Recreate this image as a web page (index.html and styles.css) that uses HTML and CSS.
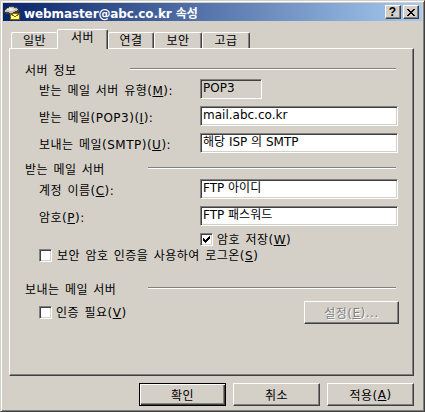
FILE: index.html
```html
<!DOCTYPE html>
<html lang="ko">
<head>
<meta charset="utf-8">
<title>webmaster@abc.co.kr 속성</title>
<link rel="stylesheet" href="styles.css">
</head>
<body>
<div class="window">
  <div class="titlebar">
    <svg class="appicon" width="16" height="16" viewBox="0 0 16 16" shape-rendering="crispEdges">
      <polygon points="0,6 6,2 13,3 15,6 15,8 8,11 0,9" fill="#404040"/>
      <polygon points="1,6 6,3 13,4 14,6 8,9 1,8" fill="#c0c0c0"/>
      <polygon points="2,6 6,4 12,5 8,7" fill="#e8e8e8"/>
      <rect x="6.5" y="9.5" width="9" height="6" fill="#ffff80" stroke="#806000"/>
      <polyline points="6.5,9.5 11,13 15.5,9.5" fill="none" stroke="#806000"/>
    </svg>
    <span class="title">webmaster@abc.co.kr 속성</span>
    <div class="tbtns">
      <span class="tbtn help">?</span>
      <span class="tbtn close">
        <svg width="8" height="7" viewBox="0 0 8 7" shape-rendering="crispEdges">
          <path d="M0 0h2v1h-2zM6 0h2v1h-2zM1 1h2v1h-2zM5 1h2v1h-2zM2 2h4v1h-4zM3 3h2v1h-2zM2 4h4v1h-4zM1 5h2v1h-2zM5 5h2v1h-2zM0 6h2v1h-2zM6 6h2v1h-2z" fill="#000"/>
        </svg>
      </span>
    </div>
  </div>
  <div class="content">
    <div class="tabs">
      <div class="tab t1 before-active">일반</div>
      <div class="tab t2 active">서버</div>
      <div class="tab t3">연결</div>
      <div class="tab t4">보안</div>
      <div class="tab t5">고급</div>
    </div>
    <div class="panel">
      <div class="ghead g1"><span class="gl">서버 정보</span><span class="etch"></span></div>
      <div class="row r-first">
        <span class="lbl">받는 메일 서버 유형(<u>M</u>):</span>
        <div class="field disabled short">POP3</div>
      </div>
      <div class="row">
        <span class="lbl">받는 메일(POP3)(<u>I</u>):</span>
        <div class="field">mail.abc.co.kr</div>
      </div>
      <div class="row">
        <span class="lbl">보내는 메일(SMTP)(<u>U</u>):</span>
        <div class="field">해당 ISP 의 SMTP</div>
      </div>

      <div class="ghead g2"><span class="gl wide">받는 메일 서버</span><span class="etch"></span></div>
      <div class="row r-first">
        <span class="lbl">계정 이름(<u>C</u>):</span>
        <div class="field">FTP 아이디</div>
      </div>
      <div class="row">
        <span class="lbl">암호(<u>P</u>):</span>
        <div class="field">FTP 패스워드</div>
      </div>
      <div class="crow c-save">
        <span class="cbox">
          <svg width="7" height="7" viewBox="0 0 7 7" shape-rendering="crispEdges">
            <path d="M0 2h1v3h-1zM1 3h1v3h-1zM2 4h1v3h-1zM3 3h1v3h-1zM4 2h1v3h-1zM5 1h1v3h-1zM6 0h1v3h-1z" fill="#000"/>
          </svg>
        </span>
        <span class="ctext">암호 저장(<u>W</u>)</span>
      </div>
      <div class="crow c-sec">
        <span class="cbox"></span>
        <span class="ctext">보안 암호 인증을 사용하여 로그온(<u>S</u>)</span>
      </div>

      <div class="ghead g3"><span class="gl wide">보내는 메일 서버</span><span class="etch"></span></div>
      <div class="arow">
        <span class="cbox"></span>
        <span class="ctext">인증 필요(<u>V</u>)</span>
        <span class="btn small disabled-btn">설정(<u>E</u>)...</span>
      </div>
    </div>
    <div class="buttons">
      <span class="btn default">확인</span>
      <span class="btn">취소</span>
      <span class="btn">적용(<u>A</u>)</span>
    </div>
  </div>
</div>
</body>
</html>
```

FILE: styles.css
```css
html, body {
  margin: 0;
  padding: 0;
  background: #d4d0c8;
}

.window {
  width: 425px;
  height: 412px;
  box-sizing: border-box;
  background: #d4d0c8;
  border: 1px solid;
  border-color: #d4d0c8 #404040 #404040 #d4d0c8;
  box-shadow: inset 1px 1px #ffffff, inset -1px -1px #808080;
  padding: 2px;
  font-family: "DejaVu Sans", "Noto Sans CJK KR", sans-serif;
  font-size: 12px;
  color: #000;
}

/* ---------- title bar ---------- */
.titlebar {
  height: 18px;
  display: flex;
  align-items: center;
  background: linear-gradient(to right, #0a246a, #a6caf0);
}

.appicon {
  display: block;
  margin-left: 1px;
}

.title {
  margin-left: 4px;
  color: #fff;
  font-weight: bold;
  letter-spacing: -0.1px;
  white-space: nowrap;
}

.tbtns {
  margin-left: auto;
  margin-right: 3px;
  display: flex;
  gap: 2px;
}

.tbtn {
  width: 16px;
  height: 14px;
  box-sizing: border-box;
  background: #d4d0c8;
  border: 1px solid;
  border-color: #fff #404040 #404040 #fff;
  box-shadow: inset -1px -1px #808080;
  display: flex;
  align-items: center;
  justify-content: center;
}

.help {
  font-family: "Liberation Sans", sans-serif;
  font-weight: bold;
  font-size: 12px;
  line-height: 12px;
  padding-right: 1px;
}

.close svg {
  display: block;
  margin-right: 1px;
}

/* ---------- tabs ---------- */
.content {
  padding: 0 8px 0 6px;
  letter-spacing: 0.5px;
  word-spacing: 1px;
}

.tabs {
  display: flex;
  align-items: flex-end;
  height: 19px;
  margin-top: 8px;
  padding-left: 2px;
}

.tab {
  box-sizing: border-box;
  height: 16px;
  border-top: 1px solid #fff;
  border-left: 1px solid #fff;
  border-right: 1px solid #404040;
  box-shadow: inset -1px 0 #808080;
  border-radius: 2px 2px 0 0;
  display: flex;
  align-items: center;
  justify-content: center;
  line-height: 14px;
  padding-top: 1px;
}

.t1 { width: 46px; }
.t2 { width: 51px; }
.t3 { width: 46px; }
.t4 { width: 48px; }
.t5 { width: 48px; }

.tab.before-active {
  border-right: none;
  box-shadow: none;
}

.tab.active {
  height: 20px;
  margin-bottom: -1px;
  position: relative;
  z-index: 2;
  background: #d4d0c8;
  padding-top: 0;
  padding-bottom: 3px;
}

/* ---------- panel ---------- */
.panel {
  width: 405px;
  height: 328px;
  box-sizing: border-box;
  border: 1px solid;
  border-color: #fff #404040 #404040 #fff;
  box-shadow: inset -1px -1px #808080;
  padding-top: 13px;
}

.ghead {
  display: flex;
  align-items: center;
  height: 14px;
  padding-left: 15px;
  padding-right: 17px;
}

.gl {
  width: 105px;
  flex: none;
  white-space: nowrap;
}

.gl.wide {
  width: 123px;
}

.etch {
  flex: 1;
  height: 0;
  border-top: 1px solid #808080;
  border-bottom: 1px solid #fff;
}

.g2 { margin-top: 8px; }
.g3 { margin-top: 19px; }

.row {
  display: flex;
  align-items: center;
  height: 20px;
  padding-left: 29px;
  margin-top: 7px;
}

.row.r-first { margin-top: 3px; }
.g2 + .row.r-first { margin-top: 4px; }

.lbl {
  width: 161px;
  flex: none;
  white-space: nowrap;
}

.field {
  width: 198px;
  height: 20px;
  box-sizing: border-box;
  border: 1px solid;
  border-color: #808080 #fff #fff #808080;
  box-shadow: inset 1px 1px #404040, inset -1px -1px #d4d0c8;
  background: #fff;
  padding-left: 2px;
  line-height: 17px;
  white-space: nowrap;
  letter-spacing: 0;
  word-spacing: 0;
}

.field.short { width: 62px; }
.field.disabled { background: #d4d0c8; }

/* ---------- checkboxes ---------- */
.crow {
  display: flex;
  align-items: center;
  height: 13px;
}

.c-save {
  margin-top: 7px;
  padding-left: 190px;
}

.c-sec {
  margin-top: 3px;
  padding-left: 29px;
}

.cbox {
  width: 13px;
  height: 13px;
  flex: none;
  box-sizing: border-box;
  border: 1px solid;
  border-color: #808080 #fff #fff #808080;
  box-shadow: inset 1px 1px #404040, inset -1px -1px #d4d0c8;
  background: #fff;
  display: flex;
  align-items: center;
  justify-content: center;
}

.cbox svg { display: block; }

.ctext {
  margin-left: 4px;
  white-space: nowrap;
  line-height: 14px;
}

.c-sec .ctext { margin-left: 5px; }

.arow {
  display: flex;
  align-items: center;
  height: 23px;
  margin-top: 6px;
  padding-left: 29px;
  padding-right: 14px;
}

/* ---------- buttons ---------- */
.btn {
  width: 87px;
  height: 23px;
  box-sizing: border-box;
  border: 1px solid;
  border-color: #fff #404040 #404040 #fff;
  box-shadow: inset -1px -1px #808080;
  display: flex;
  align-items: center;
  justify-content: center;
  white-space: nowrap;
}

.btn.small {
  width: 95px;
  margin-left: auto;
}

.btn.disabled-btn {
  color: #808080;
  text-shadow: 1px 1px #fff;
}

.btn.default {
  border: 1px solid #000;
  box-shadow: inset 1px 1px #fff, inset -1px -1px #404040, inset -2px -2px #808080;
}

.buttons {
  display: flex;
  justify-content: flex-end;
  gap: 7px;
  margin-top: 7px;
  width: 405px;
}
```
